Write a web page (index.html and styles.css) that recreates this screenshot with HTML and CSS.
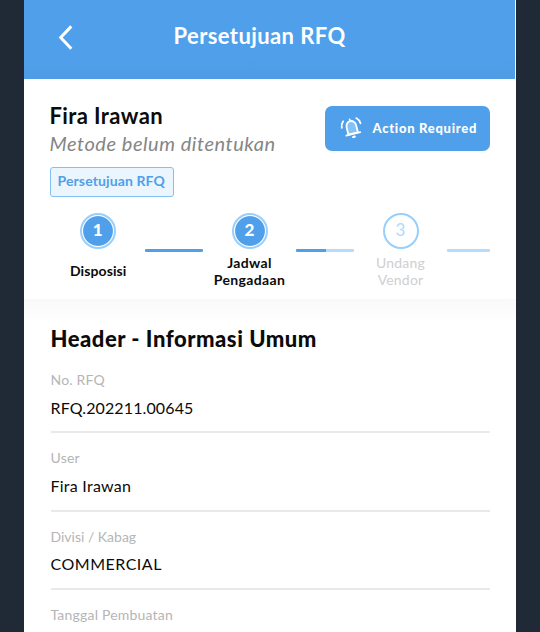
FILE: index.html
```
<!DOCTYPE html>
<html lang="id">
<head>
<meta charset="utf-8">
<title>Persetujuan RFQ</title>
<link rel="stylesheet" href="styles.css">
</head>
<body>
<main class="phone">
  <header class="topbar">
    <svg class="back" width="20" height="28" viewBox="0 0 20 28"><path d="M15.3 2.4 4.7 13.5l10.6 11.3"/></svg>
    <h1>Persetujuan RFQ</h1>
  </header>
  <section class="summary">
    <div class="summary-head">
      <div class="who">
        <h2>Fira Irawan</h2>
        <p><em>Metode belum ditentukan</em></p>
      </div>
      <button class="action">
        <svg width="24" height="24" viewBox="0 0 24 24">
          <g transform="rotate(-14 12 12)">
            <path class="bell" d="M6.9 17.6v-7.3a4.9 5.4 0 0 1 9.8 0v7.3z"/>
            <path d="M4.6 18h14.4M11.8 4.4V3"/>
            <path d="M11 21h1.6" stroke-width="2.2"/>
            <path d="M5 3.4a9 9 0 0 0-2.9 6M18.5 3.4a9 9 0 0 1 2.9 6"/>
          </g>
        </svg>
        <span>Action Required</span>
      </button>
    </div>
    <div class="chip">Persetujuan RFQ</div>
    <ol class="steps">
      <li class="step done"><span class="dot">1</span><span class="label">Disposisi</span></li>
      <li class="bar full"></li>
      <li class="step done"><span class="dot">2</span><span class="label">Jadwal<br>Pengadaan</span></li>
      <li class="bar half"></li>
      <li class="step next"><span class="dot">3</span><span class="label">Undang<br>Vendor</span></li>
      <li class="bar last"></li>
    </ol>
  </section>
  <section class="details">
    <h2>Header - Informasi Umum</h2>
    <dl>
      <div class="field"><dt>No. RFQ</dt><dd class="number">RFQ.202211.00645</dd></div>
      <div class="field"><dt>User</dt><dd>Fira Irawan</dd></div>
      <div class="field"><dt>Divisi / Kabag</dt><dd class="upper">COMMERCIAL</dd></div>
      <div class="field"><dt>Tanggal Pembuatan</dt></div>
    </dl>
  </section>
</main>
</body>
</html>
```
FILE: styles.css
```
* { box-sizing: border-box; margin: 0; padding: 0; }
html, body { height: 632px; overflow: hidden; }
body { background: #1f2a36; font-family: Lato, "Open Sans", sans-serif; color: #0b0b0b; }
.phone { width: 492px; height: 632px; margin-left: 23.5px; background: #fff; overflow: hidden; }
.topbar { height: 79px; margin-right: 1px; background: linear-gradient(#509fea 75%, #4f9ce5); display: grid; grid-template-columns: 32px 1fr; padding: 24px 0 0 32px; align-items: start; }
.back { fill: none; stroke: #fff; stroke-width: 3; }
.topbar h1 { font-size: 22px; line-height: 24px; font-weight: 700; color: #fff; padding-left: 86px; letter-spacing: .4px; white-space: nowrap; }
.summary { height: 220px; padding: 27px 26px 0; }
.summary-head { display: flex; justify-content: space-between; height: 61px; }
.who h2 { font-size: 22px; line-height: 24px; font-weight: 700; letter-spacing: .4px; margin-top: -2px; }
.who p { font-size: 20px; line-height: 28px; color: #858585; letter-spacing: .54px; margin-top: 1px; white-space: nowrap; }
.action { width: 165px; height: 44.5px; border: 0; border-radius: 7px; background: #509fea; color: #fff; display: flex; align-items: center; padding-left: 15px; font: 900 13px Lato, sans-serif; letter-spacing: .72px; white-space: nowrap; }
.action svg { margin-right: 9px; fill: none; stroke: #fff; stroke-width: 1.8; stroke-linecap: round; flex: none; }
.action .bell { fill: #83c1f6; }
.chip { width: 124px; height: 30px; border: 1px solid #83c1f5; border-radius: 3px; background: #eaf5fe; color: #509fea; font-size: 14px; font-weight: 700; line-height: 26px; padding-left: 7px; letter-spacing: .12px; white-space: nowrap; }
.steps { list-style: none; display: grid; grid-template-columns: 95.5px 58px 93px 58px 93px 42.5px; margin-top: 16px; }
.step { display: flex; flex-direction: column; align-items: center; }
.step:first-child { padding-left: 1px; }
.dot { width: 36px; height: 36px; border: 2px solid #98cffb; border-radius: 50%; display: grid; place-items: center; font-size: 17px; line-height: 30px; padding-bottom: 2px; }
.done .dot { background: radial-gradient(circle closest-side, #509fea 90%, #fff 96%); color: #fff; font-weight: 900; }
.next .dot { color: #afdafb; }
.label { height: 42px; display: grid; place-content: center; margin-top: 1px; font-size: 14px; line-height: 17px; font-weight: 700; text-align: center; letter-spacing: .35px; }
.step:first-child .label { padding: 0 0 2px 1px; letter-spacing: .1px; }
.next .label { color: #cfcfcf; font-weight: 400; letter-spacing: .2px; }
.bar { height: 3px; margin-top: 36px; border-radius: 1px; background: #b5dcfb; }
.full { background: #509fea; }
.half { background: linear-gradient(90deg, #509fea 52%, #b5dcfb 52%); }
.details { padding: 27px 26px 0 27px; background: linear-gradient(#f9f9f9, #fff 24px); }
.details h2 { font-size: 22px; line-height: 25px; margin-bottom: 1px; font-weight: 900; letter-spacing: .53px; white-space: nowrap; }
.field { height: 78.4px; border-bottom: 2px solid #e9e9e9; padding-top: 16px; }
.field:first-child { height: 81.4px; padding-top: 19px; }
.field dt { font-size: 14px; line-height: 18px; color: #b5b5b5; letter-spacing: .2px; }
.field:nth-child(3) dt { letter-spacing: 0; }
.field dd { font-size: 16px; line-height: 21px; margin-top: 7.5px; letter-spacing: .25px; }
.field .number { letter-spacing: .12px; }
.field .upper { letter-spacing: .5px; }
```
